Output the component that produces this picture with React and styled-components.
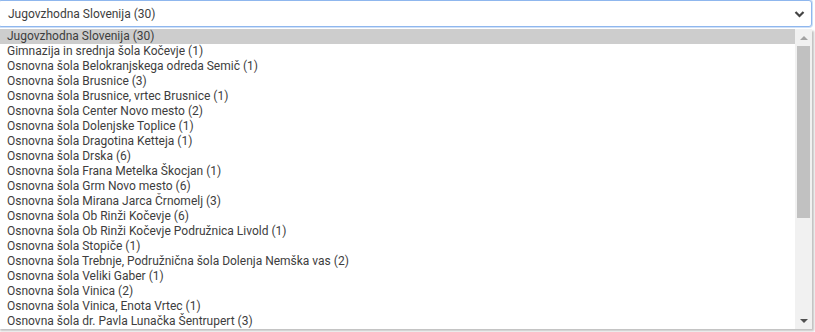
import React from "react";
import styled, { createGlobalStyle } from "styled-components";

const Global = createGlobalStyle`
  html, body { margin: 0; padding: 0; background: #ffffff; }
  body { font-family: Roboto, "Liberation Sans", sans-serif; overflow: hidden; }
`;

const Page = styled.div`
  width: 815px;
  height: 332px;
  display: flex;
  flex-direction: column;
`;

const SelectBox = styled.div`
  box-sizing: border-box;
  height: 27px;
  width: 814px;
  margin-left: -2px;
  border: 1px solid #8fb7ee;
  border-radius: 3px;
  box-shadow: 0 0 0 1px #cfe0f7;
  display: flex;
  align-items: center;
  justify-content: space-between;
  padding: 0 6px 0 9px;
  color: #3d3d3d;
  font-size: 12px;
  background: #fff;
`;

const Chevron = styled.svg`
  width: 11px;
  height: 8px;
  display: block;
`;

const Popup = styled.div`
  margin-top: 2px;
  width: 814px;
  margin-left: -2px;
  height: 300px;
  display: flex;
  box-shadow: 2px 2px 2px rgba(0, 0, 0, 0.25);
  background: #fff;
`;

const List = styled.ul`
  list-style: none;
  margin: 0;
  padding: 0;
  flex: 1;
  overflow: hidden;
`;

const Option = styled.li`
  height: 15px;
  line-height: 15px;
  padding-left: 9px;
  font-size: 12px;
  color: #3d3d3d;
  white-space: nowrap;
  background: ${(p) => (p.$active ? "#cdcdcd" : "transparent")};
`;

const Scrollbar = styled.div`
  width: 17px;
  background: #f1f1f1;
  display: flex;
  flex-direction: column;
  align-items: center;
`;

const ArrowBtn = styled.div`
  height: 17px;
  width: 17px;
  display: flex;
  align-items: center;
  justify-content: center;
`;

const Triangle = styled.div`
  width: 0;
  height: 0;
  border-left: 4px solid transparent;
  border-right: 4px solid transparent;
  ${(p) =>
    p.$up
      ? `border-bottom: 4px solid #a3a3a3;`
      : `border-top: 4px solid #505050;`}
`;

const Track = styled.div`
  flex: 1;
  width: 100%;
  display: flex;
  flex-direction: column;
  align-items: center;
`;

const Thumb = styled.div`
  width: 13px;
  background: #c1c1c1;
`;

const items = [
  "Jugovzhodna Slovenija (30)",
  "Gimnazija in srednja šola Kočevje (1)",
  "Osnovna šola Belokranjskega odreda Semič (1)",
  "Osnovna šola Brusnice (3)",
  "Osnovna šola Brusnice, vrtec Brusnice (1)",
  "Osnovna šola Center Novo mesto (2)",
  "Osnovna šola Dolenjske Toplice (1)",
  "Osnovna šola Dragotina Ketteja (1)",
  "Osnovna šola Drska (6)",
  "Osnovna šola Frana Metelka Škocjan (1)",
  "Osnovna šola Grm Novo mesto (6)",
  "Osnovna šola Mirana Jarca Črnomelj (3)",
  "Osnovna šola Ob Rinži Kočevje (6)",
  "Osnovna šola Ob Rinži Kočevje Podružnica Livold (1)",
  "Osnovna šola Stopiče (1)",
  "Osnovna šola Trebnje, Podružnična šola Dolenja Nemška vas (2)",
  "Osnovna šola Veliki Gaber (1)",
  "Osnovna šola Vinica (2)",
  "Osnovna šola Vinica, Enota Vrtec (1)",
  "Osnovna šola dr. Pavla Lunačka Šentrupert (3)",
];

export default function App() {
  return (
    <Page>
      <Global />
      <SelectBox>
        <span>Jugovzhodna Slovenija (30)</span>
        <Chevron viewBox="0 0 11 8">
          <polyline
            points="1.5,2 5.5,6 9.5,2"
            fill="none"
            stroke="#444"
            strokeWidth="2.2"
          />
        </Chevron>
      </SelectBox>
      <Popup>
        <List>
          {items.map((t, i) => (
            <Option key={t} $active={i === 0}>
              {t}
            </Option>
          ))}
        </List>
        <Scrollbar>
          <ArrowBtn>
            <Triangle $up />
          </ArrowBtn>
          <Track>
            <Thumb style={{ height: 172 }} />
          </Track>
          <ArrowBtn>
            <Triangle />
          </ArrowBtn>
        </Scrollbar>
      </Popup>
    </Page>
  );
}
